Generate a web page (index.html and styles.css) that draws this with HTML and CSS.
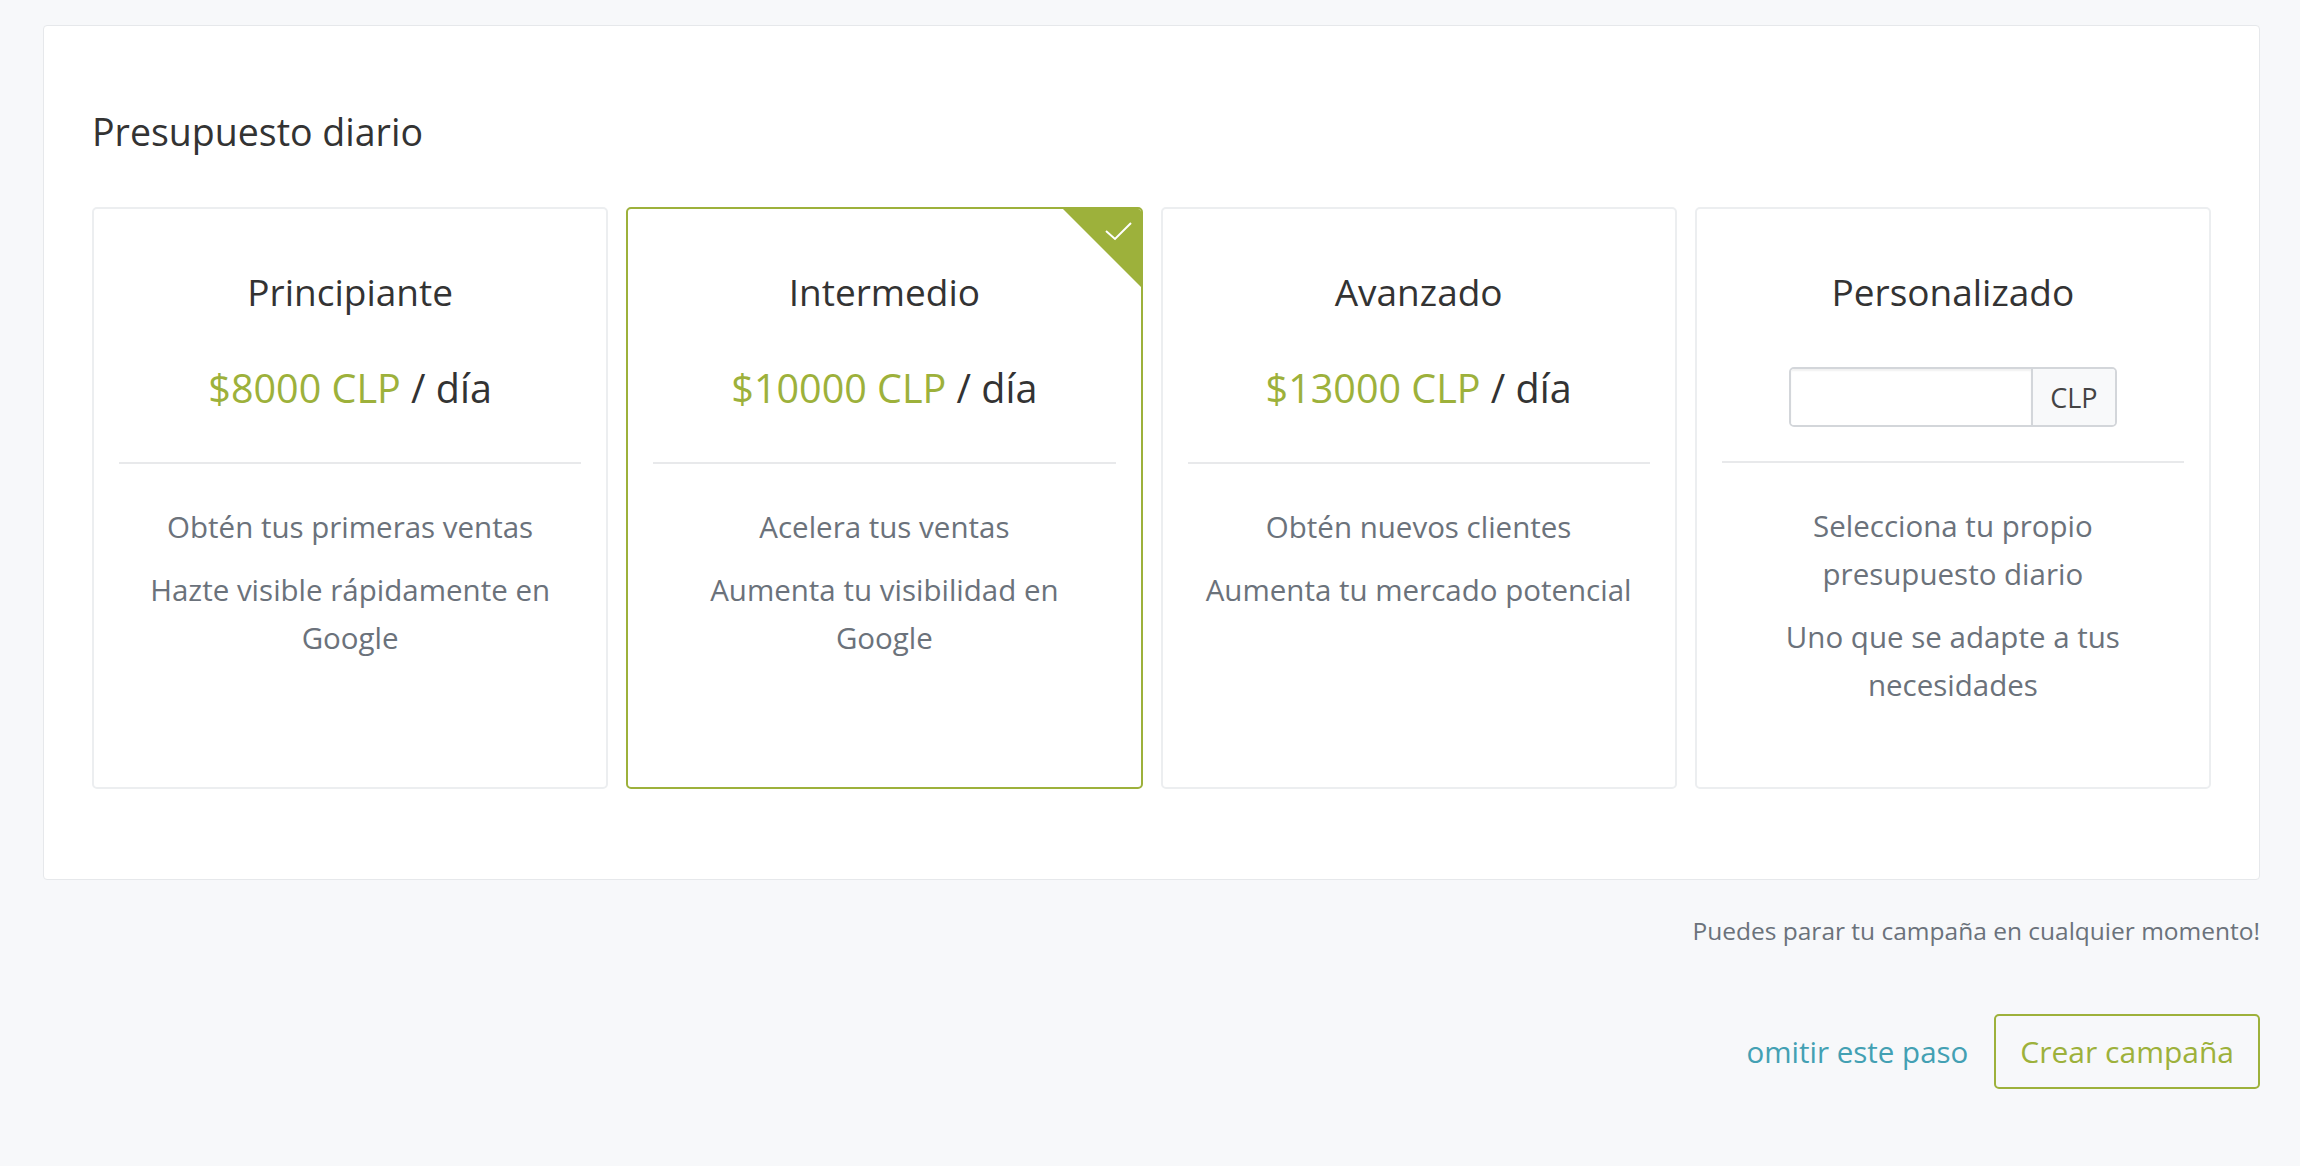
FILE: index.html
```html
<!DOCTYPE html>
<html lang="es">
<head>
  <meta charset="UTF-8">
  <meta name="viewport" content="width=device-width, initial-scale=1.0">
  <title>Presupuesto diario</title>
  <link rel="stylesheet" href="styles.css">
</head>
<body>
  <div class="page">
    <!-- Panel de presupuesto -->
    <div class="budget-panel">
      <h2 class="panel-title">Presupuesto diario</h2>

      <div class="plans">
        <div class="plan">
          <h3 class="plan-name">Principiante</h3>
          <div class="plan-price"><span class="amount">$8000 CLP</span> / día</div>
          <div class="plan-features">
            <p>Obtén tus primeras ventas</p>
            <p>Hazte visible rápidamente en Google</p>
          </div>
        </div>

        <div class="plan selected">
          <svg class="plan-check" width="78" height="78" viewBox="0 0 78 78">
            <polygon points="0,0 78,0 78,78" fill="#9db13b"/>
            <polyline points="43,22 52,30 68,14" fill="none" stroke="#fff" stroke-width="2"/>
          </svg>
          <h3 class="plan-name">Intermedio</h3>
          <div class="plan-price"><span class="amount">$10000 CLP</span> / día</div>
          <div class="plan-features">
            <p>Acelera tus ventas</p>
            <p>Aumenta tu visibilidad en Google</p>
          </div>
        </div>

        <div class="plan">
          <h3 class="plan-name">Avanzado</h3>
          <div class="plan-price"><span class="amount">$13000 CLP</span> / día</div>
          <div class="plan-features">
            <p>Obtén nuevos clientes</p>
            <p>Aumenta tu mercado potencial</p>
          </div>
        </div>

        <div class="plan">
          <h3 class="plan-name">Personalizado</h3>
          <div class="custom-input">
            <input type="text" class="custom-field">
            <span class="custom-addon">CLP</span>
          </div>
          <div class="plan-features">
            <p>Selecciona tu propio presupuesto diario</p>
            <p>Uno que se adapte a tus necesidades</p>
          </div>
        </div>
      </div>
    </div>

    <!-- Pie -->
    <p class="hint">Puedes parar tu campaña en cualquier momento!</p>
    <div class="actions">
      <a href="#" class="skip-link">omitir este paso</a>
      <button class="create-btn">Crear campaña</button>
    </div>
  </div>
</body>
</html>
```

FILE: styles.css
```css
/* Общие стили */
* {
  margin: 0;
  padding: 0;
  box-sizing: border-box;
}
body {
  font-family: "Open Sans", Arial, sans-serif;
  background-color: #f7f8fa;
  color: #333;
}
.page {
  padding: 25px 40px 0 43px;
}
/* Panel */
.budget-panel {
  background: #fff;
  border: 1px solid #e6e8eb;
  border-radius: 4px;
  padding: 84px 48px 90px;
}
.panel-title {
  font-size: 37.5px;
  font-weight: 400;
  line-height: 44px;
  color: #333;
  margin-bottom: 53px;
}
.plans {
  display: grid;
  grid-template-columns: repeat(4, 1fr);
  gap: 18px;
}
/* Card */
.plan {
  position: relative;
  height: 582px;
  border: 2px solid #eceef0;
  border-radius: 5px;
  padding: 61px 25px 0;
  text-align: center;
  overflow: hidden;
}
.plan.selected {
  border-color: #9db13b;
}
.plan-check {
  position: absolute;
  top: 0;
  right: 0;
  display: block;
}
.plan-name {
  font-size: 37px;
  font-weight: 400;
  line-height: 44px;
  color: #333;
}
.plan-price {
  font-size: 39.5px;
  line-height: 48px;
  color: #333;
  margin: 50px 0;
}
.plan-price .amount {
  color: #9db13b;
}
.plan-features {
  border-top: 2px solid #e8e9eb;
  padding-top: 39px;
}
.plan-features p {
  font-size: 29.5px;
  line-height: 48px;
  color: #6b727b;
  margin-bottom: 15px;
  padding: 0 10px;
}
/* Custom budget input */
.custom-input {
  display: flex;
  width: 328px;
  height: 60px;
  margin: 53px auto 34px;
  border: 2px solid #d3d6da;
  border-radius: 5px;
  overflow: hidden;
}
.custom-field {
  flex: 1;
  min-width: 0;
  border: none;
  outline: none;
  box-shadow: inset 0 2px 2px rgba(0, 0, 0, 0.06);
  font-family: inherit;
  font-size: 27px;
  padding: 0 16px;
}
.custom-addon {
  width: 84px;
  display: flex;
  align-items: center;
  justify-content: center;
  border-left: 2px solid #d3d6da;
  background: #f8f9fa;
  font-size: 27px;
  color: #444;
}
/* Footer */
.hint {
  margin-top: 34px;
  text-align: right;
  font-size: 24.5px;
  line-height: 34px;
  color: #6b727b;
}
.actions {
  display: flex;
  justify-content: flex-end;
  align-items: center;
  gap: 26px;
  margin-top: 66px;
}
.skip-link {
  font-size: 29.5px;
  color: #43a0b3;
  text-decoration: none;
}
.create-btn {
  height: 75px;
  padding: 0 24px;
  background: transparent;
  border: 2px solid #9db13b;
  border-radius: 5px;
  font-family: inherit;
  font-size: 30px;
  color: #9db13b;
  cursor: pointer;
}
```
